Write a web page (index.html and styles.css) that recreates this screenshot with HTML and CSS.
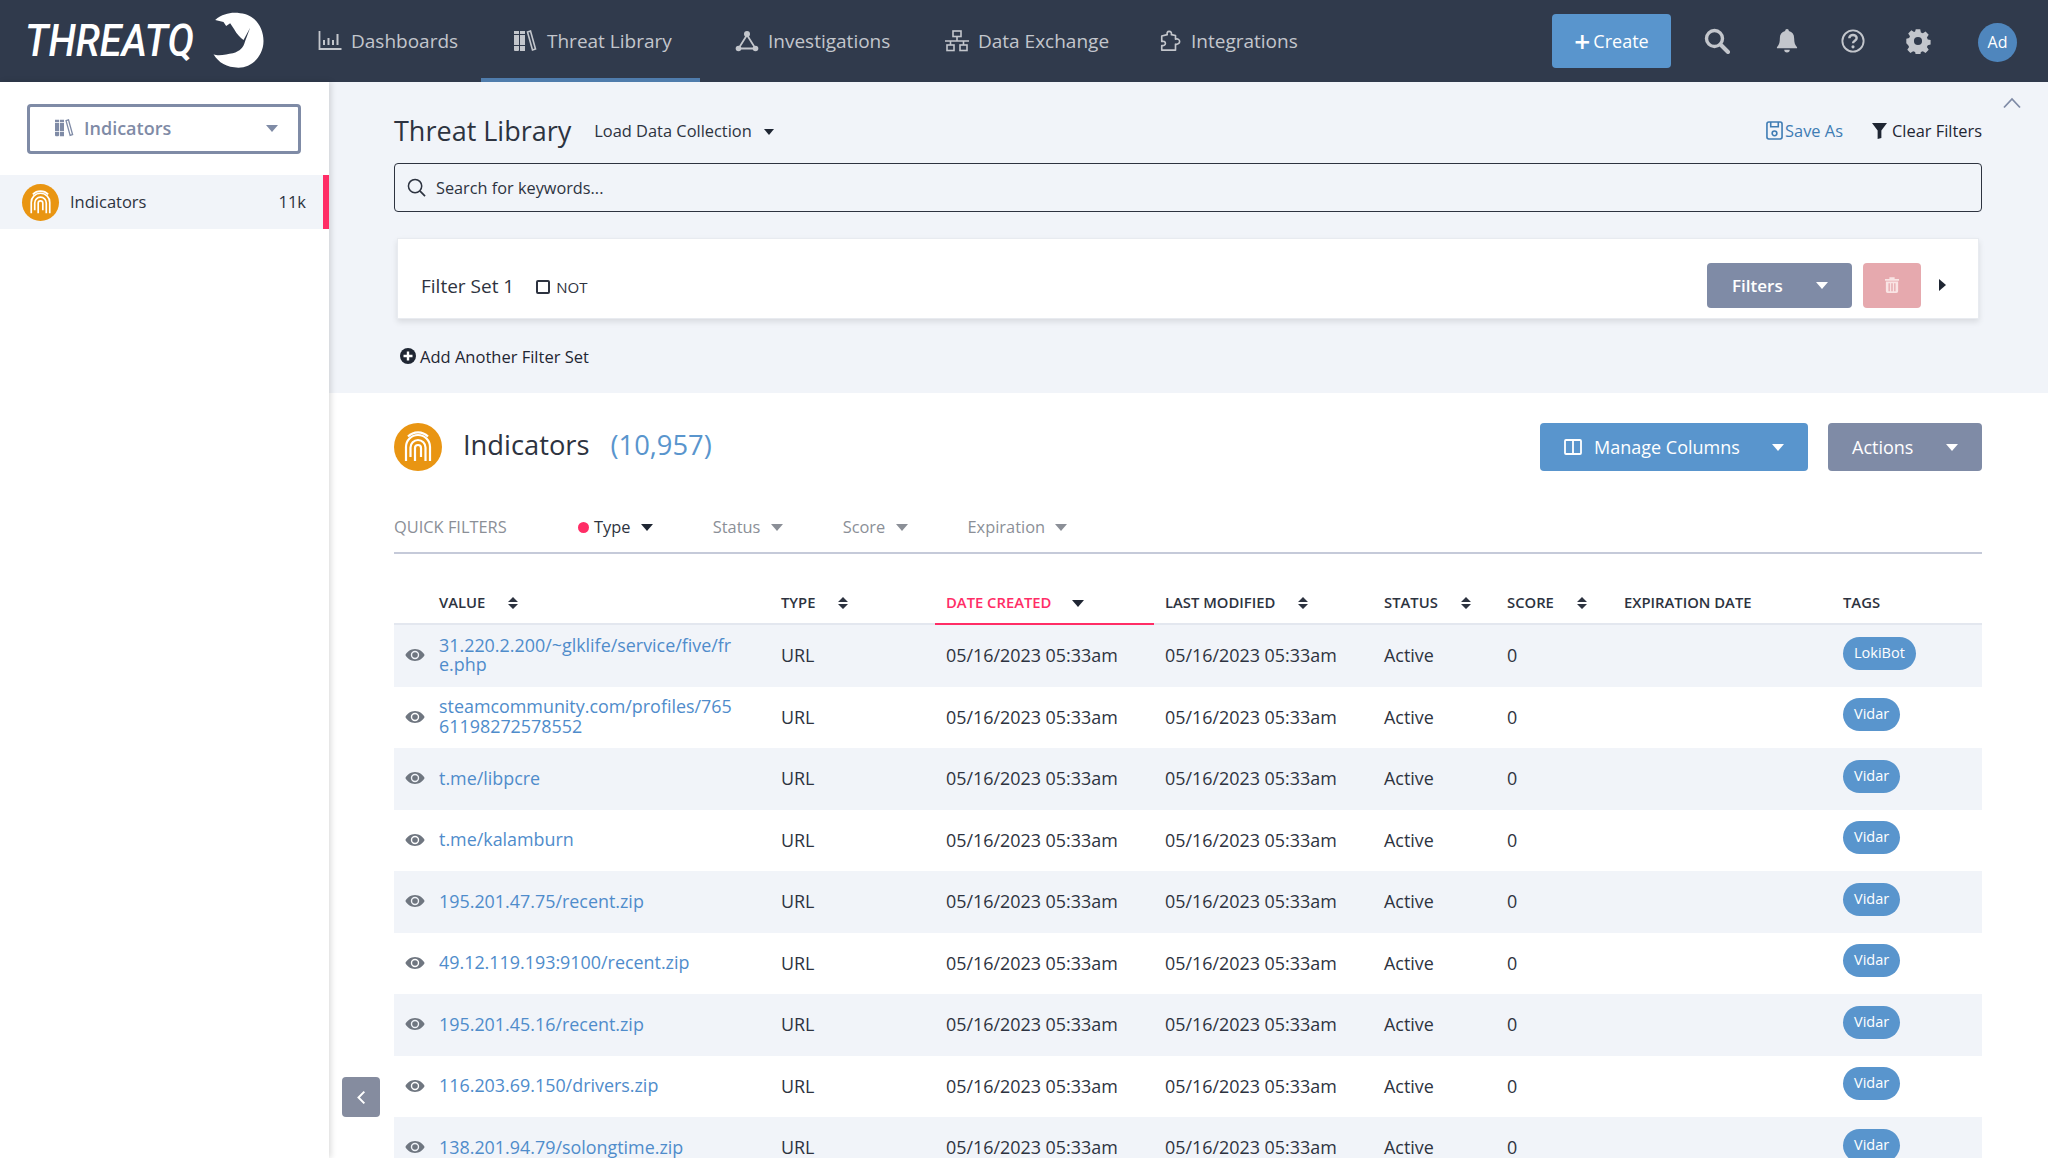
FILE: index.html
```html
<!DOCTYPE html>
<html lang="en">
<head>
    <meta charset="UTF-8">
    <meta name="viewport" content="width=device-width, initial-scale=1.0">
    <title>Threat Library</title>
    <link rel="stylesheet" href="styles.css">
</head>
<body>
    <!-- shared icons -->
    <svg class="sprite" aria-hidden="true">
        <symbol id="i-finger" viewBox="0 0 48 48">
            <g fill="none" stroke="#fff" stroke-width="2.2" stroke-linecap="butt">
                <path d="M12 38V24a12 12 0 0 1 24 0v14"/>
                <path d="M16.5 34V24.5a7.5 7.5 0 0 1 15 0V38"/>
                <path d="M21 38V25a3 3 0 0 1 6 0v9"/>
                <path d="M14 15a14 14 0 0 1 20 0" transform="translate(0 -1.5)"/>
            </g>
        </symbol>
        <symbol id="i-library" viewBox="0 0 24 22">
            <g fill="currentColor">
                <path d="M1 1h5v3H1zM1 5h5v10H1zM1 16h5v4a1 1 0 0 1-1 1H2a1 1 0 0 1-1-1zM7 1h5v3H7zM7 5h5v10H7zM7 16h5v5H7z"/>
            </g>
            <path d="M14.5 2l3-1 5 18-3 1z" fill="none" stroke="currentColor" stroke-width="1.6"/>
        </symbol>
        <symbol id="i-eye" viewBox="0 0 20 14">
            <path fill="#6f7680" fill-rule="evenodd" d="M10 1C5.6 1 2 3.9.4 7 2 10.100 5.600 13 10 13s8-2.900 9.600-6C18 3.900 14.400 1 10 1zm0 10.200A4.200 4.200 0 1 1 10 2.800a4.200 4.200 0 0 1 0 8.400z"/>
            <circle cx="10" cy="7" r="2.800" fill="#6f7680"/>
        </symbol>
        <symbol id="i-sort" viewBox="0 0 12 14">
            <path fill="#2d3340" d="M6 1l5 5H1zM1 8h10l-5 5z"/>
        </symbol>
    </svg>

    <header class="topbar">
        <a class="logo">
            <span class="logo-text">THREATQ</span>
            <svg class="logo-mark" viewBox="600 35 170 180">
                <path fill="#fff" d="M615 62C640 42 665 38 690 42C735 46 760 85 760 125C760 170 725 205 685 205C650 205 625 190 610 165C625 172 650 165 668 162C690 155 700 145 705 125L720 85L700 122C690 115 680 105 672 90L660 72L648 80L640 68Z"/>
            </svg>
        </a>
        <nav class="main-nav">
            <a class="nav-item">
                <svg class="nav-icon" viewBox="0 0 24 22"><path fill="none" stroke="currentColor" stroke-width="1.8" d="M1.500 1v18h22"/><path fill="none" stroke="currentColor" stroke-width="2" d="M6 15v-5M10.500 15V8M15 15v-5M19.500 15V4"/></svg>
                Dashboards
            </a>
            <a class="nav-item active">
                <svg class="nav-icon"><use href="#i-library"/></svg>
                Threat Library
            </a>
            <a class="nav-item">
                <svg class="nav-icon" viewBox="0 0 24 22"><path fill="none" stroke="currentColor" stroke-width="1.800" d="M12 5L3.500 18.500h17z"/><circle cx="12" cy="4" r="3" fill="currentColor"/><circle cx="3.500" cy="18.500" r="2.800" fill="currentColor"/><circle cx="20.500" cy="18.500" r="2.800" fill="currentColor"/></svg>
                Investigations
            </a>
            <a class="nav-item">
                <svg class="nav-icon" viewBox="0 0 24 22"><g fill="none" stroke="currentColor" stroke-width="1.600"><rect x="8" y="1" width="8" height="5.500"/><rect x="2" y="15" width="7" height="5.500"/><rect x="15" y="15" width="7" height="5.500"/><path d="M12 6.500V11M0 11h24M5.500 11v4M18.500 11v4"/></g></svg>
                Data Exchange
            </a>
            <a class="nav-item">
                <svg class="nav-icon" viewBox="0 0 24 24"><path fill="none" stroke="currentColor" stroke-width="1.800" stroke-linejoin="round" d="M11 1.500c2 0 3 1.500 2.500 3.500l4.500 1v4c2.500-.8 4.500.5 4.500 2.500S20.500 16 18 15.500V22H3v-5c2.500.5 4-.8 4-2.500S5 12 3 12.500V6.500l6-1.500C8.500 3 9 1.500 11 1.500z"/></svg>
                Integrations
            </a>
        </nav>
        <button class="create-btn"><span class="plus">+</span>Create</button>
        <div class="top-icons">
            <svg class="top-icon search-icon" viewBox="0 0 26 26"><circle cx="10.500" cy="10.500" r="8" fill="none" stroke="currentColor" stroke-width="3.400"/><path stroke="currentColor" stroke-width="4" stroke-linecap="round" d="M17 17l7 7"/></svg>
            <svg class="top-icon bell-icon" viewBox="0 0 24 26"><path fill="currentColor" d="M12 0a2 2 0 0 1 2 2.200c3.800.8 5.800 3.800 5.800 7.800 0 5 1 7.500 3.200 9.700v1.300H1v-1.300C3.200 17.500 4.200 15 4.200 10c0-4 2-7 5.800-7.800A2 2 0 0 1 12 0zM9 22.500h6a3 3 0 0 1-6 0z"/></svg>
            <svg class="top-icon help-icon" viewBox="0 0 26 26"><circle cx="13" cy="13" r="11.500" fill="none" stroke="currentColor" stroke-width="2"/><path fill="none" stroke="currentColor" stroke-width="2.600" d="M9 10c0-2.500 2-3.500 4-3.500s4 1.200 4 3.300c0 3-4 2.700-4 5.700"/><circle cx="13" cy="19.300" r="1.700" fill="currentColor"/></svg>
            <svg class="top-icon gear-icon" viewBox="0 0 26 26"><path fill="currentColor" fill-rule="evenodd" d="M10.500 0h5l.7 3.500 2.200 1 3-2 3.500 3.500-2 3 1 2.200 3.100.7v5l-3.100.7-1 2.200 2 3-3.500 3.500-3-2-2.200 1-.7 3.200h-5l-.7-3.200-2.200-1-3 2-3.500-3.500 2-3-1-2.200L0 15.500v-5l3.100-.7 1-2.200-2-3L5.600 1.100l3 2 1.200-.6zM13 8.500a4.500 4.500 0 1 0 0 9 4.500 4.500 0 0 0 0-9z" transform="translate(1.300 1.300) scale(.9)"/></svg>
            <span class="avatar">Ad</span>
        </div>
    </header>

    <div class="app">
        <aside class="sidebar">
            <div class="type-select">
                <svg class="select-icon"><use href="#i-library"/></svg>
                <span>Indicators</span>
                <i class="caret caret-slate"></i>
            </div>
            <div class="side-row">
                <span class="type-badge small"><svg><use href="#i-finger"/></svg></span>
                <span class="side-name">Indicators</span>
                <span class="side-count">11k</span>
            </div>
        </aside>

        <main class="content">
            <button class="collapse-btn" aria-label="Collapse">
                <svg viewBox="0 0 12 18" width="10" height="15"><path fill="none" stroke="#fff" stroke-width="2.400" d="M10 2L3 9l7 7"/></svg>
            </button>

            <section class="filter-panel">
                <svg class="panel-toggle" viewBox="0 0 18 12" width="18" height="12"><path fill="none" stroke="#7f8ba6" stroke-width="1.800" d="M1 10.500L9 2l8 8.500"/></svg>
                <div class="panel-head">
                    <h1>Threat Library</h1>
                    <span class="load-link">Load Data Collection <i class="caret caret-dark"></i></span>
                    <span class="head-links">
                        <a class="save-as">
                            <svg viewBox="0 0 18 20" width="17" height="19"><g fill="none" stroke="#3f7cb4" stroke-width="1.700"><rect x="1" y="1" width="16" height="18" rx="2"/><path d="M5 1v5h8V1"/><circle cx="9" cy="13" r="2.500"/></g></svg>Save As
                        </a>
                        <a class="clear-filters">
                            <svg viewBox="0 0 16 18" width="15" height="17"><path fill="#1f2633" d="M0 1h16L10 9v8l-4 1V9z"/></svg>Clear Filters
                        </a>
                    </span>
                </div>
                <div class="search-box">
                    <svg viewBox="0 0 20 20" width="19" height="19"><circle cx="8.500" cy="8.500" r="7" fill="none" stroke="#2d3340" stroke-width="1.600"/><path stroke="#2d3340" stroke-width="1.800" d="M13.500 13.500l5.500 5.500"/></svg>
                    <span>Search for keywords...</span>
                </div>
                <div class="filter-card">
                    <span class="set-name">Filter Set 1</span>
                    <label class="not-check"><i class="checkbox"></i>NOT</label>
                    <button class="filters-btn">Filters <i class="caret caret-white"></i></button>
                    <button class="trash-btn">
                        <svg viewBox="0 0 16 18" width="14" height="16"><path fill="#f9e4e4" d="M5 0h6v2h5v2H0V2h5zM1 5h14v11a2 2 0 0 1-2 2H3a2 2 0 0 1-2-2zm3 2v9h1.500V7zm3.200 0v9h1.600V7zm3.300 0v9H12V7z"/></svg>
                    </button>
                    <i class="arrow-right"></i>
                </div>
                <a class="add-set">
                    <svg viewBox="0 0 16 16" width="16" height="16"><circle cx="8" cy="8" r="8" fill="#1f2633"/><path stroke="#fff" stroke-width="2.400" d="M8 3.500v9M3.500 8h9"/></svg>
                    Add Another Filter Set
                </a>
            </section>

            <section class="results">
                <div class="results-head">
                    <span class="type-badge"><svg><use href="#i-finger"/></svg></span>
                    <h2>Indicators</h2>
                    <span class="total">(10,957)</span>
                    <button class="btn-blue">
                        <svg viewBox="0 0 18 16" width="18" height="16"><g fill="none" stroke="#fff" stroke-width="1.800"><rect x="1" y="1" width="16" height="14" rx="1"/><path d="M9 1v14"/></g></svg>
                        Manage Columns <i class="caret caret-white"></i>
                    </button>
                    <button class="btn-slate">Actions <i class="caret caret-white"></i></button>
                </div>

                <div class="quick-filters">
                    <span class="qf-label">QUICK FILTERS</span>
                    <span class="qf on"><i class="dot"></i>Type <i class="caret caret-dark"></i></span>
                    <span class="qf">Status <i class="caret caret-grey"></i></span>
                    <span class="qf">Score <i class="caret caret-grey"></i></span>
                    <span class="qf">Expiration <i class="caret caret-grey"></i></span>
                </div>

                <table class="results-table">
                    <colgroup>
                        <col class="c-eye"><col class="c-value"><col class="c-type"><col class="c-date"><col class="c-date"><col class="c-status"><col class="c-score"><col class="c-date"><col>
                    </colgroup>
                    <thead>
                        <tr>
                            <th></th>
                            <th>Value <svg class="sort"><use href="#i-sort"/></svg></th>
                            <th>Type <svg class="sort"><use href="#i-sort"/></svg></th>
                            <th class="sorted">Date Created <i class="caret caret-dark"></i></th>
                            <th>Last Modified <svg class="sort"><use href="#i-sort"/></svg></th>
                            <th>Status <svg class="sort"><use href="#i-sort"/></svg></th>
                            <th>Score <svg class="sort"><use href="#i-sort"/></svg></th>
                            <th>Expiration Date</th>
                            <th>Tags</th>
                        </tr>
                    </thead>
                    <tbody>
                        <tr>
                            <td><svg class="eye"><use href="#i-eye"/></svg></td>
                            <td><a class="val">31.220.2.200/~glklife/service/five/fre.php</a></td>
                            <td>URL</td><td>05/16/2023 05:33am</td><td>05/16/2023 05:33am</td><td>Active</td><td>0</td><td></td>
                            <td><span class="tag">LokiBot</span></td>
                        </tr>
                        <tr>
                            <td><svg class="eye"><use href="#i-eye"/></svg></td>
                            <td><a class="val">steamcommunity.com/profiles/76561198272578552</a></td>
                            <td>URL</td><td>05/16/2023 05:33am</td><td>05/16/2023 05:33am</td><td>Active</td><td>0</td><td></td>
                            <td><span class="tag">Vidar</span></td>
                        </tr>
                        <tr>
                            <td><svg class="eye"><use href="#i-eye"/></svg></td>
                            <td><a class="val">t.me/libpcre</a></td>
                            <td>URL</td><td>05/16/2023 05:33am</td><td>05/16/2023 05:33am</td><td>Active</td><td>0</td><td></td>
                            <td><span class="tag">Vidar</span></td>
                        </tr>
                        <tr>
                            <td><svg class="eye"><use href="#i-eye"/></svg></td>
                            <td><a class="val">t.me/kalamburn</a></td>
                            <td>URL</td><td>05/16/2023 05:33am</td><td>05/16/2023 05:33am</td><td>Active</td><td>0</td><td></td>
                            <td><span class="tag">Vidar</span></td>
                        </tr>
                        <tr>
                            <td><svg class="eye"><use href="#i-eye"/></svg></td>
                            <td><a class="val">195.201.47.75/recent.zip</a></td>
                            <td>URL</td><td>05/16/2023 05:33am</td><td>05/16/2023 05:33am</td><td>Active</td><td>0</td><td></td>
                            <td><span class="tag">Vidar</span></td>
                        </tr>
                        <tr>
                            <td><svg class="eye"><use href="#i-eye"/></svg></td>
                            <td><a class="val">49.12.119.193:9100/recent.zip</a></td>
                            <td>URL</td><td>05/16/2023 05:33am</td><td>05/16/2023 05:33am</td><td>Active</td><td>0</td><td></td>
                            <td><span class="tag">Vidar</span></td>
                        </tr>
                        <tr>
                            <td><svg class="eye"><use href="#i-eye"/></svg></td>
                            <td><a class="val">195.201.45.16/recent.zip</a></td>
                            <td>URL</td><td>05/16/2023 05:33am</td><td>05/16/2023 05:33am</td><td>Active</td><td>0</td><td></td>
                            <td><span class="tag">Vidar</span></td>
                        </tr>
                        <tr>
                            <td><svg class="eye"><use href="#i-eye"/></svg></td>
                            <td><a class="val">116.203.69.150/drivers.zip</a></td>
                            <td>URL</td><td>05/16/2023 05:33am</td><td>05/16/2023 05:33am</td><td>Active</td><td>0</td><td></td>
                            <td><span class="tag">Vidar</span></td>
                        </tr>
                        <tr>
                            <td><svg class="eye"><use href="#i-eye"/></svg></td>
                            <td><a class="val">138.201.94.79/solongtime.zip</a></td>
                            <td>URL</td><td>05/16/2023 05:33am</td><td>05/16/2023 05:33am</td><td>Active</td><td>0</td><td></td>
                            <td><span class="tag">Vidar</span></td>
                        </tr>
                    </tbody>
                </table>
            </section>
        </main>
    </div>
</body>
</html>
```

FILE: styles.css
```css
* {
    box-sizing: border-box;
}

html, body {
    height: 100%;
}

body {
    margin: 0;
    overflow: hidden;
    font-family: "Open Sans", Arial, sans-serif;
    font-size: 18px;
    color: #2d3340;
    background-color: #fff;
}

button {
    font-family: inherit;
    border: none;
    color: #fff;
    cursor: pointer;
}

h1, h2 {
    margin: 0;
    font-weight: 400;
}

.sprite {
    display: none;
}

/* top bar */

.topbar {
    display: flex;
    align-items: center;
    height: 82px;
    background-color: #303a4c;
    color: #c3c6cc;
}

.logo {
    display: flex;
    align-items: center;
    width: 286px;
    height: 100%;
    flex: none;
}

.logo-text {
    width: 185px;
    margin-left: 25px;
    font-family: Roboto, "Liberation Sans", sans-serif;
    font-size: 44px;
    font-style: italic;
    font-weight: 500;
    color: #fff;
    white-space: nowrap;
    transform: scaleX(.9);
    transform-origin: left center;
}

.logo-mark {
    width: 57px;
    height: 60px;
}

.main-nav {
    display: grid;
    grid-template-columns: 195px 222px 210px 213px 200px;
    height: 100%;
    flex: none;
    font-size: 19px;
}

.nav-item {
    display: flex;
    align-items: center;
    gap: 9px;
    padding-left: 32px;
    white-space: nowrap;
}

.nav-item.active {
    gap: 10px;
    margin-right: 3px;
    border-bottom: 4px solid #4f7cac;
    padding-top: 4px;
}

.nav-icon {
    width: 24px;
    height: 22px;
    flex: none;
}

.create-btn {
    display: flex;
    align-items: center;
    justify-content: center;
    width: 119px;
    height: 54px;
    margin-left: 226px;
    border-radius: 4px;
    background-color: #5995cd;
    font-size: 18px;
    font-weight: 500;
}

.plus {
    margin-right: 3px;
    font-size: 28px;
    font-weight: 600;
    line-height: 1;
}

.top-icons {
    display: flex;
    align-items: center;
    height: 100%;
}

.top-icon {
    display: block;
    flex: none;
}

.search-icon {
    width: 26px;
    height: 26px;
    margin-left: 33px;
}

.bell-icon {
    width: 22px;
    height: 26px;
    margin-left: 46px;
}

.help-icon {
    width: 24px;
    height: 24px;
    margin-left: 43px;
}

.gear-icon {
    width: 26px;
    height: 26px;
    margin-left: 40px;
}

.avatar {
    display: flex;
    align-items: center;
    justify-content: center;
    width: 39px;
    height: 39px;
    margin-left: 47px;
    margin-top: 2px;
    border-radius: 50%;
    background-color: #4f86bd;
    color: #fff;
    font-size: 16px;
}

/* sidebar */

.app {
    display: flex;
    height: calc(100vh - 82px);
}

.sidebar {
    position: relative;
    z-index: 2;
    width: 329px;
    flex: none;
    padding-top: 22px;
    background-color: #fff;
    box-shadow: 2px 0 6px rgba(0, 0, 0, 0.14);
}

.type-select {
    display: flex;
    align-items: center;
    width: 274px;
    height: 50px;
    margin-left: 27px;
    padding: 0 20px 2px 24px;
    border: 3px solid #7f8ba6;
    border-radius: 4px;
    color: #7f8ba6;
    font-size: 18px;
    font-weight: 600;
}

.select-icon {
    width: 20px;
    height: 18px;
    margin-right: 10px;
}

.type-select .caret {
    margin-left: auto;
}

.side-row {
    display: flex;
    align-items: center;
    height: 54px;
    margin-top: 21px;
    padding: 0 17px 0 22px;
    border-right: 6px solid #ff2d66;
    background-color: #f1f4f9;
    font-size: 16.500px;
}

.side-name {
    margin-left: 11px;
    margin-bottom: 1px;
}

.side-count {
    margin-left: auto;
    margin-bottom: 1px;
}

.type-badge {
    display: block;
    width: 48px;
    height: 48px;
    flex: none;
    border-radius: 50%;
    background-color: #e99512;
}

.type-badge svg {
    display: block;
    width: 100%;
    height: 100%;
}

.type-badge.small {
    width: 37px;
    height: 37px;
}

/* carets */

.caret {
    display: inline-block;
    width: 0;
    height: 0;
    border-left: 6px solid transparent;
    border-right: 6px solid transparent;
    border-top: 7px solid #2d3340;
    vertical-align: 2px;
}

.caret-dark {
    border-top-color: #1f2633;
}

.caret-slate {
    border-top-color: #7f8ba6;
}

.caret-white {
    border-top-color: #fff;
}

.caret-grey {
    border-top-color: #8b8f97;
}

/* filter panel */

.content {
    position: relative;
    flex: 1;
    min-width: 0;
    overflow: hidden;
}

.collapse-btn {
    position: absolute;
    z-index: 3;
    left: 13px;
    top: 995px;
    display: flex;
    align-items: center;
    justify-content: center;
    width: 38px;
    height: 40px;
    padding: 0;
    border-radius: 4px;
    background-color: #858c9f;
}

.filter-panel {
    position: relative;
    height: 311px;
    padding: 28px 66px 0 65px;
    background-color: #f1f4f9;
}

.panel-toggle {
    position: absolute;
    top: 15px;
    right: 27px;
}

.panel-head {
    display: flex;
    align-items: center;
    height: 40px;
}

.panel-head h1 {
    font-size: 27px;
}

.load-link {
    margin-left: 23px;
    font-size: 16.400px;
}

.load-link .caret {
    margin-left: 8px;
    border-left-width: 5px;
    border-right-width: 5px;
    border-top-width: 6px;
}

.head-links {
    display: flex;
    align-items: center;
    gap: 29px;
    margin-left: auto;
    font-size: 16.400px;
}

.head-links a {
    display: flex;
    align-items: center;
    gap: 2px;
}

.head-links a.clear-filters {
    gap: 5px;
}

.save-as {
    color: #3f7cb4;
}

.clear-filters {
    color: #1f2633;
}

.search-box {
    display: flex;
    align-items: center;
    gap: 10px;
    height: 49px;
    margin-top: 13px;
    padding-left: 12px;
    border: 1.500px solid #2d3340;
    border-radius: 4px;
    font-size: 16.300px;
}

.filter-card {
    display: flex;
    align-items: center;
    height: 81px;
    margin: 26px 3px 0;
    padding: 13px 32px 0 23px;
    background-color: #fff;
    border: 1px solid #e8ebf0;
    box-shadow: 0 3px 6px rgba(0, 0, 0, 0.1);
}

.set-name {
    font-size: 19px;
    margin-top: 1px;
}

.not-check {
    display: flex;
    align-items: center;
    gap: 6px;
    margin-left: 22px;
    margin-top: 3px;
    font-size: 15px;
}

.checkbox {
    display: block;
    width: 14px;
    height: 14px;
    border: 2px solid #2d3340;
    border-radius: 2px;
}

.filters-btn {
    display: flex;
    align-items: center;
    justify-content: space-between;
    width: 145px;
    height: 45px;
    margin-left: auto;
    padding: 0 24px 0 25px;
    border-radius: 4px;
    background-color: #7f8ba6;
    font-size: 17px;
    font-weight: 600;
}

.trash-btn {
    display: flex;
    align-items: center;
    justify-content: center;
    width: 58px;
    height: 45px;
    margin-left: 11px;
    padding: 0;
    border-radius: 4px;
    background-color: #e6a9ae;
}

.arrow-right {
    display: block;
    width: 0;
    height: 0;
    margin-left: 18px;
    border-top: 6px solid transparent;
    border-bottom: 6px solid transparent;
    border-left: 7px solid #1f2633;
}

.add-set {
    display: flex;
    align-items: center;
    gap: 4px;
    height: 28px;
    margin: 23px 0 0 6px;
    font-size: 16.500px;
    color: #1f2633;
}

/* results */

.results {
    padding: 30px 66px 0 65px;
}

.results-head {
    display: flex;
    align-items: center;
    height: 48px;
}

.results-head h2 {
    margin-left: 21px;
    padding-bottom: 6px;
    font-size: 27.300px;
}

.total {
    margin-left: 21px;
    padding-bottom: 6px;
    color: #5995cd;
    font-size: 27.300px;
}

.btn-blue, .btn-slate {
    display: flex;
    align-items: center;
    height: 48px;
    border-radius: 4px;
    font-size: 18px;
}

.btn-blue {
    width: 268px;
    margin-left: auto;
    padding: 0 24px;
    gap: 12px;
    background-color: #5995cd;
}

.btn-blue .caret {
    margin-left: auto;
}

.btn-slate {
    justify-content: space-between;
    width: 154px;
    margin-left: 20px;
    padding: 0 24px;
    background-color: #7f8ba6;
}

.quick-filters {
    display: flex;
    align-items: center;
    height: 46px;
    margin-top: 37px;
    padding-bottom: 7px;
    border-bottom: 2px solid #c5cad9;
    font-size: 16.400px;
    color: #8b8f97;
}

.qf-label {
    width: 184px;
}

.qf {
    margin-right: 60px;
}

.qf .caret {
    margin-left: 6px;
}

.qf.on {
    color: #2d3340;
}

.dot {
    display: inline-block;
    width: 11px;
    height: 11px;
    margin-right: 5px;
    border-radius: 50%;
    background-color: #ff2d66;
}

.results-table {
    width: 100%;
    margin-top: 24px;
    border-collapse: separate;
    border-spacing: 0;
    table-layout: fixed;
}

.c-eye {
    width: 34px;
}

.c-value {
    width: 342px;
}

.c-type {
    width: 165px;
}

.c-date {
    width: 219px;
}

.c-status {
    width: 123px;
}

.c-score {
    width: 117px;
}

.results-table th {
    height: 47px;
    padding: 3px 11px 0;
    border-bottom: 2px solid #e3e7ef;
    font-size: 14.800px;
    font-weight: 600;
    text-align: left;
    text-transform: uppercase;
    white-space: nowrap;
}

.results-table th.sorted {
    border-bottom-color: #ff2d66;
    color: #ff2d66;
}

.results-table th .caret {
    margin-left: 17px;
    vertical-align: 1px;
}

.sort {
    width: 12px;
    height: 14px;
    margin-left: 18px;
    vertical-align: -2px;
}

.results-table td {
    height: 61.500px;
    padding: 0 11px 1px;
    font-size: 17.900px;
    vertical-align: middle;
}

.results-table td:first-child {
    padding: 0 0 1px 11px;
}

.results-table tbody tr:nth-child(odd) {
    background-color: #f1f4f9;
}

.eye {
    display: block;
    width: 20px;
    height: 14px;
}

.val {
    display: block;
    width: 296px;
    color: #4f8ccb;
    line-height: 19.500px;
    word-break: break-all;
}

.tag {
    display: inline-block;
    height: 33px;
    margin-bottom: 4px;
    padding: 0 11px;
    border-radius: 17px;
    background-color: #5995cd;
    color: #fff;
    font-size: 14.500px;
    line-height: 32px;
}
```
